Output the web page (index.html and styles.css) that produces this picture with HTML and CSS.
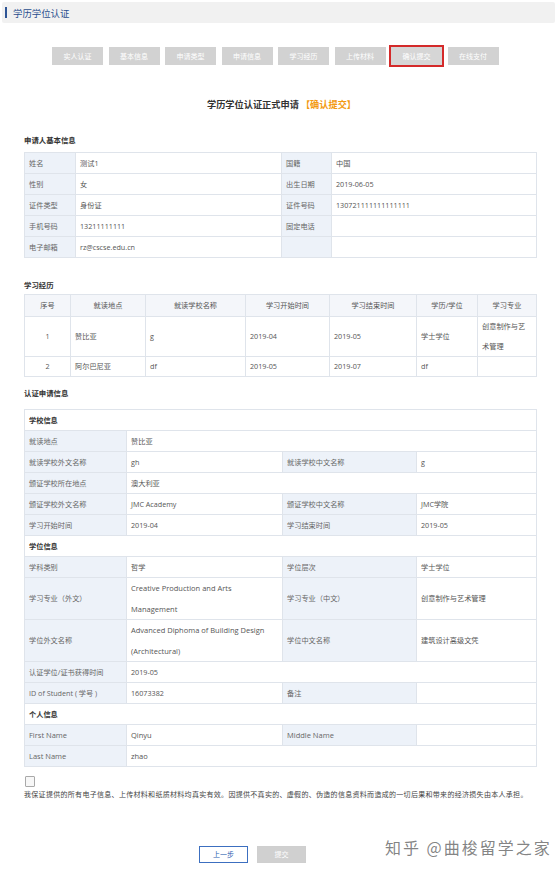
FILE: index.html
```html
<!DOCTYPE html>
<html lang="zh-CN">
<head>
<meta charset="utf-8">
<title>学历学位认证</title>
<link rel="stylesheet" href="styles.css">
</head>
<body>
<div class="page">
  <div class="topbar"><span class="topbar-mark"></span><span class="topbar-title">学历学位认证</span></div>

  <div class="steps">
    <span class="step">实人认证</span>
    <span class="step">基本信息</span>
    <span class="step">申请类型</span>
    <span class="step">申请信息</span>
    <span class="step">学习经历</span>
    <span class="step">上传材料</span>
    <span class="step step-active">确认提交</span>
    <span class="step">在线支付</span>
  </div>

  <div class="main">
    <h1 class="page-title">学历学位认证正式申请 <span class="page-title-tag">【确认提交】</span></h1>

    <h2 class="sec-title sec-basic">申请人基本信息</h2>
    <table class="grid basic">
      <colgroup><col class="c51"><col class="c206"><col class="c50"><col></colgroup>
      <tr><td class="lb">姓名</td><td>测试1</td><td class="lb">国籍</td><td>中国</td></tr>
      <tr><td class="lb">性别</td><td>女</td><td class="lb">出生日期</td><td>2019-06-05</td></tr>
      <tr><td class="lb">证件类型</td><td>身份证</td><td class="lb">证件号码</td><td>130721111111111111</td></tr>
      <tr><td class="lb">手机号码</td><td>13211111111</td><td class="lb">固定电话</td><td></td></tr>
      <tr><td class="lb">电子邮箱</td><td>rz@cscse.edu.cn</td><td class="lb"></td><td></td></tr>
    </table>

    <h2 class="sec-title sec-study">学习经历</h2>
    <table class="grid study">
      <colgroup><col class="s1"><col class="s2"><col class="s3"><col class="s4"><col class="s5"><col class="s6"><col></colgroup>
      <tr class="study-head"><th>序号</th><th>就读地点</th><th>就读学校名称</th><th>学习开始时间</th><th>学习结束时间</th><th>学历/学位</th><th>学习专业</th></tr>
      <tr class="study-tall"><td class="ctr">1</td><td>赞比亚</td><td>g</td><td>2019-04</td><td>2019-05</td><td>学士学位</td><td>创意制作与艺<br>术管理</td></tr>
      <tr class="study-short"><td class="ctr">2</td><td>阿尔巴尼亚</td><td>df</td><td>2019-05</td><td>2019-07</td><td>df</td><td></td></tr>
    </table>

    <h2 class="sec-title sec-auth">认证申请信息</h2>
    <table class="grid auth">
      <colgroup><col class="a1"><col class="a2"><col class="a3"><col></colgroup>
      <tr><td class="group" colspan="4">学校信息</td></tr>
      <tr><td class="lb">就读地点</td><td colspan="3">赞比亚</td></tr>
      <tr><td class="lb">就读学校外文名称</td><td>gh</td><td class="lb">就读学校中文名称</td><td>g</td></tr>
      <tr><td class="lb">颁证学校所在地点</td><td colspan="3">澳大利亚</td></tr>
      <tr><td class="lb">颁证学校外文名称</td><td>JMC Academy</td><td class="lb">颁证学校中文名称</td><td>JMC学院</td></tr>
      <tr><td class="lb">学习开始时间</td><td>2019-04</td><td class="lb">学习结束时间</td><td>2019-05</td></tr>
      <tr><td class="group" colspan="4">学位信息</td></tr>
      <tr><td class="lb">学科类别</td><td>哲学</td><td class="lb">学位层次</td><td>学士学位</td></tr>
      <tr class="tall"><td class="lb">学习专业（外文）</td><td class="latin">Creative Production and Arts<br>Management</td><td class="lb">学习专业（中文）</td><td>创意制作与艺术管理</td></tr>
      <tr class="tall"><td class="lb">学位外文名称</td><td class="latin">Advanced Diphoma of Building Design<br>(Architectural)</td><td class="lb">学位中文名称</td><td>建筑设计高级文凭</td></tr>
      <tr><td class="lb">认证学位/证书获得时间</td><td colspan="3">2019-05</td></tr>
      <tr><td class="lb">ID of Student ( 学号 )</td><td>16073382</td><td class="lb">备注</td><td></td></tr>
      <tr><td class="group" colspan="4">个人信息</td></tr>
      <tr><td class="lb latin">First Name</td><td class="latin">Qinyu</td><td class="lb latin">Middle Name</td><td></td></tr>
      <tr><td class="lb latin">Last Name</td><td class="latin" colspan="3">zhao</td></tr>
    </table>

    <div class="agree">
      <span class="checkbox"></span>
      <p class="agree-text">我保证提供的所有电子信息、上传材料和纸质材料均真实有效。因提供不真实的、虚假的、伪造的信息资料而造成的一切后果和带来的经济损失由本人承担。</p>
    </div>

    <div class="actions">
      <span class="btn btn-prev">上一步</span>
      <span class="btn btn-submit">提交</span>
    </div>
  </div>

  <div class="watermark">知乎 @曲梭留学之家</div>
</div>
</body>
</html>
```
FILE: styles.css
```css
html, body {
  margin: 0;
  padding: 0;
  background: #ffffff;
}
body {
  font-family: "Open Sans", "Noto Sans CJK SC", sans-serif;
  color: #555;
  font-size: 7.2px;
}
.page {
  position: relative;
  width: 557px;
  min-height: 871px;
}
.topbar {
  margin: 2px 2px 0 2px;
  height: 21px;
  background: #f1f1f1;
  border-radius: 2px;
  display: flex;
  align-items: center;
  padding-left: 3px;
}
.topbar-mark {
  width: 2px;
  height: 11px;
  background: #2e5596;
  margin-right: 6px;
}
.topbar-title {
  font-family: "Noto Sans CJK SC", sans-serif;
  font-size: 9.4px;
  color: #2a4f8e;
  line-height: 12px;
}
.steps {
  display: flex;
  gap: 5.5px;
  padding-left: 52px;
  margin-top: 24px;
  height: 18px;
  align-items: center;
}
.step {
  box-sizing: border-box;
  width: 51px;
  height: 18px;
  background: #d2d2d2;
  color: #ffffff;
  font-family: "Noto Sans CJK SC", sans-serif;
  font-size: 7px;
  line-height: 18px;
  text-align: center;
}
.step-active {
  outline: 2px solid #d42a2a;
  outline-offset: 0;
  background: #d6d6d6;
}
.main {
  padding: 0 20px 0 24px;
}
.page-title {
  margin: 32px 0 0 0;
  text-align: center;
  font-family: "Noto Sans CJK SC", sans-serif;
  font-size: 9.2px;
  line-height: 14px;
  font-weight: bold;
  color: #333;
  padding-left: 2px;
}
.page-title-tag {
  color: #f39a12;
}
.sec-title {
  margin: 0;
  font-family: "Noto Sans CJK SC", sans-serif;
  font-size: 7.4px;
  line-height: 12px;
  font-weight: bold;
  color: #333;
}
.sec-basic { margin-top: 23px; margin-bottom: 6px; }
.sec-study { margin-top: 21px; margin-bottom: 3px; }
.sec-auth { margin-top: 10px; margin-bottom: 10px; }
.grid {
  width: 100%;
  border-collapse: collapse;
  table-layout: fixed;
}
.grid td, .grid th {
  border: 1px solid #dfe4eb;
  padding: 0 4px;
  line-height: 20px;
  height: 20px;
  font-weight: normal;
  color: #555;
  text-align: left;
  vertical-align: middle;
  white-space: nowrap;
  overflow: hidden;
}
.grid td.latin {
  font-size: 7.5px;
}
.grid td.lb {
  background: #edf2f9;
  color: #666;
}
.grid td.group {
  background: #ffffff;
  color: #333;
  font-weight: bold;
}
.c51 { width: 51px; }
.c206 { width: 206px; }
.c50 { width: 50px; }
.s1 { width: 46px; }
.s2 { width: 75px; }
.s3 { width: 100px; }
.s4 { width: 84px; }
.s5 { width: 87px; }
.s6 { width: 61px; }
.study-head th {
  background: #f4f6fa;
  text-align: center;
  color: #555;
  height: 21px;
  line-height: 21px;
}
.study-tall td {
  height: 39px;
  line-height: 19.5px;
}
.study-short td {
  height: 19px;
  line-height: 19px;
}
.grid td.ctr { text-align: center; }
.a1 { width: 102px; }
.a2 { width: 156px; }
.a3 { width: 134px; }
.tall td {
  height: 41px;
  line-height: 20.5px;
}
.agree {
  margin-top: 9px;
}
.checkbox {
  display: block;
  box-sizing: border-box;
  width: 10px;
  height: 11px;
  border: 1px solid #a9a9a9;
  border-radius: 1px;
  background: #f7f7f7;
  margin-left: 1px;
}
.agree-text {
  margin: 1px 0 0 0;
  font-family: "Noto Sans CJK SC", sans-serif;
  font-size: 7px;
  letter-spacing: 0.3px;
  line-height: 12px;
  color: #444;
  white-space: nowrap;
}
.actions {
  display: flex;
  gap: 9px;
  margin-top: 46px;
  padding-left: 175px;
}
.btn {
  box-sizing: border-box;
  width: 49px;
  height: 17px;
  font-family: "Noto Sans CJK SC", sans-serif;
  font-size: 7px;
  line-height: 15px;
  text-align: center;
}
.btn-prev {
  border: 1px solid #3c6fc0;
  color: #2c5eb0;
  background: #fff;
}
.btn-submit {
  border: 1px solid #cfcfcf;
  background: #d0d0d0;
  color: #fff;
}
.watermark {
  position: absolute;
  left: 385px;
  top: 834px;
  font-family: "Noto Sans CJK SC", sans-serif;
  font-size: 16px;
  line-height: 22px;
  letter-spacing: 2px;
  color: rgba(110, 110, 110, 0.85);
  text-shadow: 0 0 2px #fff, 0 0 1px #fff;
  white-space: nowrap;
}
```
